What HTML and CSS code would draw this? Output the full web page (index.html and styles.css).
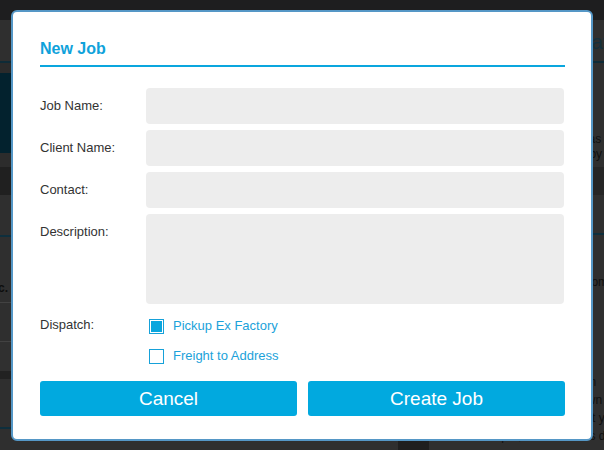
FILE: index.html
```html
<!DOCTYPE html>
<html lang="en">
<head>
<meta charset="utf-8">
<title>New Job</title>
<link rel="stylesheet" href="styles.css">
</head>
<body>
<div class="page">
  <div class="topbar"></div>
  <div class="main">
    <aside class="side">
      <div class="s-head"></div>
      <div class="s-gap"></div>
      <div class="s-hero"></div>
      <div class="s-gap2"></div>
      <div class="s-bar"></div>
      <div class="s-sec"></div>
      <div class="s-row s-row1"><span>Files etc.</span></div>
      <div class="s-row s-row2"></div>
      <div class="s-row3"></div>
      <div class="s-bar2"></div>
      <div class="s-sec2"></div>
    </aside>
    <div class="center">
      <div class="c-fill"></div>
      <div class="c-foot"><span class="c-tab"></span></div>
    </div>
    <section class="panel">
      <div class="p-head">Data Formats</div>
      <div class="p-body">
        <p class="p-text">Values are stored as<br>and then grouped by</p>
      </div>
      <div class="p-bar"></div>
      <div class="p-sec">Usage</div>
      <div class="p-note">Sample template comp</div>
      <p class="p-foot">Each value is put in<br>the field, then shown a<br>the preview, so that yo<br>input, in the canvas dra</p>
    </section>
  </div>

  <div class="overlay">
    <div class="modal">
      <h1 class="title">New Job</h1>
      <form class="form">
        <label class="lbl">Job Name:</label>
        <div class="field"></div>
        <label class="lbl">Client Name:</label>
        <div class="field"></div>
        <label class="lbl">Contact:</label>
        <div class="field"></div>
        <label class="lbl">Description:</label>
        <div class="field area"></div>
        <label class="lbl lbl-short">Dispatch:</label>
        <div class="opts">
          <div class="opt"><span class="box checked"><span class="fill"></span></span><span class="opt-text">Pickup Ex Factory</span></div>
          <div class="opt"><span class="box"></span><span class="opt-text">Freight to Address</span></div>
        </div>
      </form>
      <div class="actions">
        <button class="btn" type="button">Cancel</button>
        <button class="btn" type="button">Create Job</button>
      </div>
    </div>
  </div>
</div>
</body>
</html>
```
FILE: styles.css
```css
* { box-sizing: border-box; margin: 0; padding: 0; }
html, body { width: 604px; height: 450px; overflow: hidden; }
body {
  background: #2f2f2f;
  font-family: "Liberation Sans", Arial, sans-serif;
  position: relative;
}
.page { display: flex; flex-direction: column; height: 450px; }
.topbar { height: 20px; flex: none; background: #1e1e1f; }
.main { flex: 1; display: flex; }

/* left strip */
.side { width: 12px; flex: none; display: flex; flex-direction: column; overflow: hidden; }
.s-head { height: 43px; background: #2f2f2f; border-bottom: 2px solid #0e2b37; }
.s-gap { height: 10px; background: #2b2b2b; }
.s-hero { height: 80px; background: #03222e; }
.s-gap2 { height: 14px; background: #2c2c2c; }
.s-bar { height: 28px; background: #202020; }
.s-sec { height: 42px; background: #2f2f2f; border-bottom: 2px solid #0e2f3d; }
.s-row { background: #2f2f2f; border-bottom: 1px solid #424242; display: flex; justify-content: flex-end; }
.s-row1 { height: 66px; align-items: flex-end; padding-bottom: 7px; }
.s-row1 span { font-size: 12px; font-weight: bold; color: #0d0d0d; white-space: nowrap; margin-right: 4px; }
.s-row2 { height: 39px; }
.s-row3 { height: 29px; background: #303030; }
.s-bar2 { height: 8px; background: #222; }
.s-sec2 { height: 50px; background: #2f2f2f; border-bottom: 2px solid #0e2f3d; }

/* center */
.center { flex: 1; display: flex; flex-direction: column; }
.c-fill { flex: 1; }
.c-foot { height: 9px; padding-left: 386px; }
.c-tab { display: block; width: 31px; height: 9px; background: #1f1f1f; }

/* right panel */
.panel { width: 114px; flex: none; display: flex; flex-direction: column; color: #0f0f0f; }
.p-head {
  height: 43px; border-bottom: 2px solid #0e2b37;
  font-size: 21px; line-height: 43px; color: #15303c; white-space: nowrap; padding-left: 2px;
}
.p-body { height: 104px; position: relative; }
.p-text { font-size: 12px; line-height: 15px; white-space: nowrap; padding-top: 69px; padding-left: 2px; }
.p-bar { height: 28px; background: #262626; }
.p-sec {
  height: 40px; border-bottom: 2px solid #0e2f3d;
  font-size: 21px; line-height: 40px; color: #15303c; white-space: nowrap; padding-left: 2px;
}
.p-note { font-size: 12px; line-height: 15px; white-space: nowrap; padding-top: 40px; padding-left: 2px; }
.p-foot { font-size: 12px; line-height: 18px; white-space: nowrap; padding-top: 83px; padding-left: 2px; }

/* modal */
.overlay { position: absolute; inset: 0; }
.modal {
  position: absolute; left: 11px; top: 10px;
  width: 582px; height: 431px;
  background: #fff;
  border: 2px solid #5597c6;
  border-radius: 6px;
  padding: 28px 26px 0 27px;
}
.title {
  font-size: 16px; line-height: 18px; font-weight: bold; color: #0fa2db;
  padding-bottom: 7px; border-bottom: 2px solid #0aa6de;
}
.form {
  margin-top: 21px;
  display: grid;
  grid-template-columns: 106px 1fr;
  row-gap: 6px;
}
.lbl { font-size: 13px; line-height: 36px; color: #333; }
.lbl-short { line-height: 30px; }
.field { height: 36px; background: #ededed; border-radius: 4px; margin-right: 1px; }
.area { height: 90px; }
.opts { display: flex; flex-direction: column; padding-left: 3px; }
.opt { height: 30px; display: flex; align-items: center; gap: 9px; }
.box {
  width: 15px; height: 15px; flex: none;
  border: 1px solid #16a1d9; background: #fff;
  padding: 1px; margin-top: 2px;
}
.fill { display: block; width: 100%; height: 100%; background: #0aa6de; }
.opt-text { font-size: 13px; color: #1ba2da; }
.actions {
  margin-top: 11px;
  display: grid; grid-template-columns: 1fr 1fr; column-gap: 11px;
}
.btn {
  height: 35px; border: none; border-radius: 3px;
  background: #01a9df; color: #fff;
  font-family: "Liberation Sans", Arial, sans-serif; font-size: 19px;
}
```
